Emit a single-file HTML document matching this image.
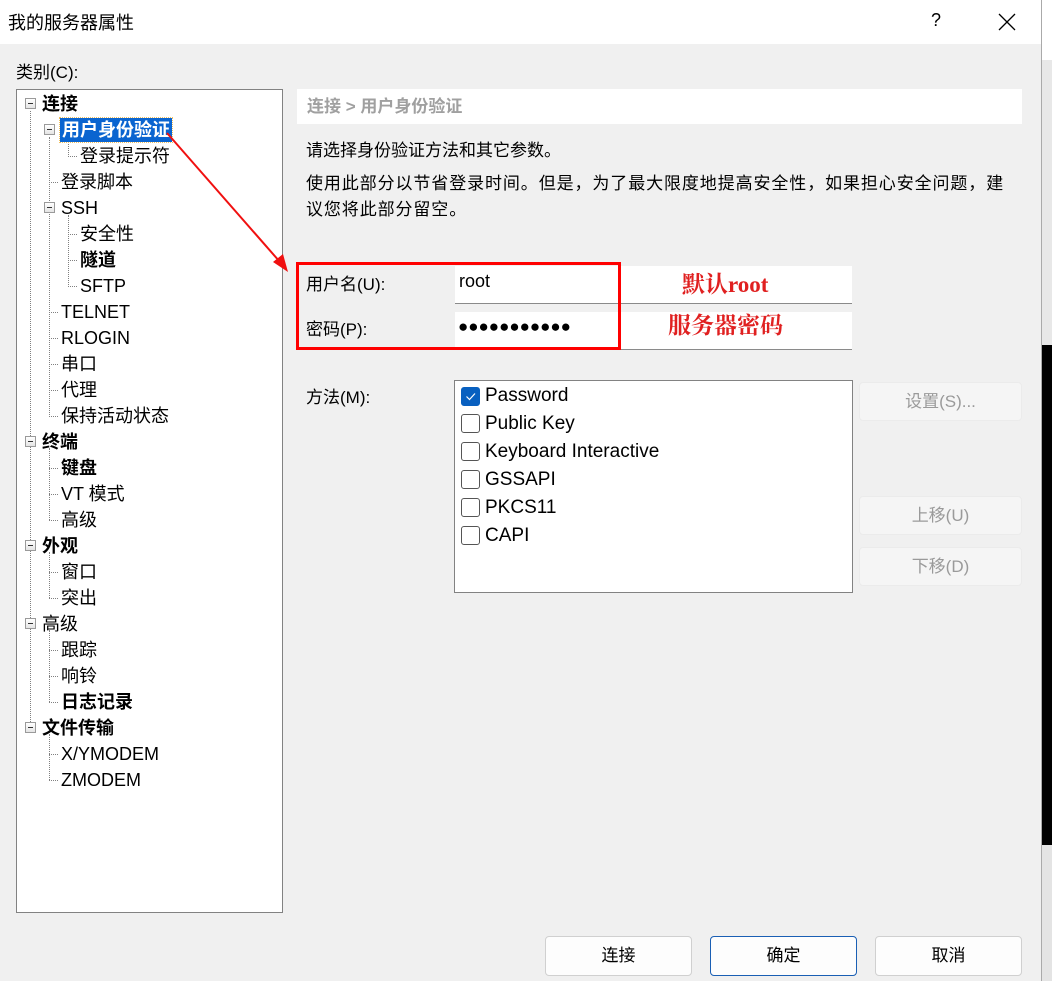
<!DOCTYPE html>
<html><head><meta charset="utf-8">
<style>
*{margin:0;padding:0;box-sizing:border-box}
body{width:1052px;height:981px;position:relative;overflow:hidden;background:#f0f0f0;font-family:"Liberation Sans","Noto Sans CJK SC",sans-serif;font-size:17px;color:#000}
.a{position:absolute;white-space:nowrap}
.t{position:absolute;white-space:nowrap;line-height:24px;height:24px;font-size:18px}
.b{font-weight:bold}
.box{position:absolute;width:11px;height:11px;border:1px solid #9a9a9a;background:linear-gradient(#fff,#e4e4e4)}
.box::after{content:"";position:absolute;left:2px;top:4px;width:5px;height:1px;background:#333}
.vl{position:absolute;width:0;border-left:1px dotted #808080}
.hl{position:absolute;height:0;border-top:1px dotted #808080}
.btn{position:absolute;background:#fdfdfd;border:1px solid #d0d0d0;border-radius:4px;text-align:center;line-height:37px}
.dis{background:#f5f5f5;border-color:#ebebeb;color:#9a9a9a}
.cb{position:absolute;left:461px;width:19px;height:19px;border:1px solid #555;border-radius:3px;background:#fff}
.it{position:absolute;left:485px;line-height:24px;font-size:19px}
.red{color:#e02020;font-family:'Liberation Serif','Noto Serif CJK SC',serif;font-size:23px;line-height:28px;font-weight:bold}
</style></head><body>
<div class="a" style="left:1042px;top:0;width:10px;height:60px;background:#fff"></div>
<div class="a" style="left:1042px;top:60px;width:10px;height:285px;background:#e8e8e8"></div>
<div class="a" style="left:1042px;top:345px;width:10px;height:500px;background:#000"></div>
<div class="a" style="left:1042px;top:845px;width:10px;height:136px;background:#e4e4e4"></div>
<div class="a" style="left:1041px;top:0;width:1px;height:981px;background:#aaa"></div>

<div class="a" style="left:0;top:0;width:1041px;height:44px;background:#fff"></div>
<div class="a" style="left:8px;top:9px;font-size:18px">我的服务器属性</div>
<div class="a" style="left:931px;top:10px;font-size:18px">?</div>
<svg class="a" style="left:998px;top:13px" width="18" height="18"><path d="M1 1L17 17M17 1L1 17" stroke="#000" stroke-width="1.3"/></svg>

<div class="a" style="left:16px;top:58px">类别(C):</div>

<div class="a" style="left:16px;top:89px;width:267px;height:824px;background:#fff;border:1px solid #828282"></div>
<div class="vl" style="left:30px;top:111px;height:617px"></div>
<div class="vl" style="left:49px;top:137px;height:280px"></div>
<div class="vl" style="left:68px;top:137px;height:20px"></div>
<div class="vl" style="left:68px;top:215px;height:72px"></div>
<div class="vl" style="left:49px;top:448px;height:72px"></div>
<div class="vl" style="left:49px;top:552px;height:46px"></div>
<div class="vl" style="left:49px;top:630px;height:72px"></div>
<div class="vl" style="left:49px;top:734px;height:46px"></div>
<div class="hl" style="left:68px;top:156px;width:9px"></div>
<div class="hl" style="left:68px;top:234px;width:9px"></div>
<div class="hl" style="left:68px;top:260px;width:9px"></div>
<div class="hl" style="left:68px;top:286px;width:9px"></div>
<div class="hl" style="left:49px;top:182px;width:9px"></div>
<div class="hl" style="left:49px;top:312px;width:9px"></div>
<div class="hl" style="left:49px;top:338px;width:9px"></div>
<div class="hl" style="left:49px;top:364px;width:9px"></div>
<div class="hl" style="left:49px;top:390px;width:9px"></div>
<div class="hl" style="left:49px;top:416px;width:9px"></div>
<div class="hl" style="left:49px;top:468px;width:9px"></div>
<div class="hl" style="left:49px;top:494px;width:9px"></div>
<div class="hl" style="left:49px;top:520px;width:9px"></div>
<div class="hl" style="left:49px;top:572px;width:9px"></div>
<div class="hl" style="left:49px;top:598px;width:9px"></div>
<div class="hl" style="left:49px;top:650px;width:9px"></div>
<div class="hl" style="left:49px;top:676px;width:9px"></div>
<div class="hl" style="left:49px;top:702px;width:9px"></div>
<div class="hl" style="left:49px;top:754px;width:9px"></div>
<div class="hl" style="left:49px;top:780px;width:9px"></div>
<div class="box" style="left:25px;top:98px"></div>
<div class="box" style="left:44px;top:124px"></div>
<div class="box" style="left:44px;top:202px"></div>
<div class="box" style="left:25px;top:436px"></div>
<div class="box" style="left:25px;top:540px"></div>
<div class="box" style="left:25px;top:618px"></div>
<div class="box" style="left:25px;top:722px"></div>

<div class="t b" style="left:42px;top:92px">连接</div>
<div class="t b" style="left:60px;top:118px;background:#0a64d0;color:#fff;padding:0 2px;outline:1px dotted #f0c060">用户身份验证</div>
<div class="t" style="left:80px;top:144px">登录提示符</div>
<div class="t" style="left:61px;top:170px">登录脚本</div>
<div class="t" style="left:61px;top:196px">SSH</div>
<div class="t" style="left:80px;top:222px">安全性</div>
<div class="t b" style="left:80px;top:248px">隧道</div>
<div class="t" style="left:80px;top:274px">SFTP</div>
<div class="t" style="left:61px;top:300px">TELNET</div>
<div class="t" style="left:61px;top:326px">RLOGIN</div>
<div class="t" style="left:61px;top:352px">串口</div>
<div class="t" style="left:61px;top:378px">代理</div>
<div class="t" style="left:61px;top:404px">保持活动状态</div>
<div class="t b" style="left:42px;top:430px">终端</div>
<div class="t b" style="left:61px;top:456px">键盘</div>
<div class="t" style="left:61px;top:482px">VT 模式</div>
<div class="t" style="left:61px;top:508px">高级</div>
<div class="t b" style="left:42px;top:534px">外观</div>
<div class="t" style="left:61px;top:560px">窗口</div>
<div class="t" style="left:61px;top:586px">突出</div>
<div class="t" style="left:42px;top:612px">高级</div>
<div class="t" style="left:61px;top:638px">跟踪</div>
<div class="t" style="left:61px;top:664px">响铃</div>
<div class="t b" style="left:61px;top:690px">日志记录</div>
<div class="t b" style="left:42px;top:716px">文件传输</div>
<div class="t" style="left:61px;top:742px">X/YMODEM</div>
<div class="t" style="left:61px;top:768px">ZMODEM</div>

<div class="a" style="left:297px;top:89px;width:725px;height:35px;background:#fff"></div>
<div class="a b" style="left:307px;top:95px;color:#a0a0a0;line-height:24px">连接 &gt; 用户身份验证</div>
<div class="a" style="left:306px;top:139px;line-height:24px">请选择身份验证方法和其它参数。</div>
<div class="a" style="left:306px;top:171px;line-height:26px;letter-spacing:0.9px">使用此部分以节省登录时间。但是，为了最大限度地提高安全性，如果担心安全问题，建<br>议您将此部分留空。</div>

<div class="a" style="left:455px;top:266px;width:397px;height:38px;background:#fff;border-bottom:1px solid #8a8a8a"></div>
<div class="a" style="left:455px;top:312px;width:397px;height:38px;background:#fff;border-bottom:1px solid #8a8a8a"></div>
<div class="a" style="left:306px;top:273px;line-height:24px">用户名(U):</div>
<div class="a" style="left:459px;top:269px;line-height:24px;font-size:18px">root</div>
<div class="a" style="left:306px;top:318px;line-height:24px">密码(P):</div>
<div class="a" style="left:458px;top:315px;line-height:24px;font-size:17px">●●●●●●●●●●●</div>
<div class="a" style="left:296px;top:262px;width:325px;height:88px;border:3px solid #f00"></div>
<div class="a red" style="left:682px;top:271px">默认root</div>
<div class="a red" style="left:668px;top:312px">服务器密码</div>

<div class="a" style="left:306px;top:386px;line-height:24px">方法(M):</div>
<div class="a" style="left:454px;top:380px;width:399px;height:213px;background:#fff;border:1px solid #828282"></div>
<div class="cb" style="top:387px;background:#0860c0;border-color:#0860c0"><svg width="17" height="17" style="position:absolute;left:0;top:0"><path d="M4.5 8.5l3 3 5.5-6" stroke="#fff" stroke-width="1.2" fill="none"/></svg></div>
<div class="it" style="top:384px">Password</div>
<div class="cb" style="top:414px"></div><div class="it" style="top:412px">Public Key</div>
<div class="cb" style="top:442px"></div><div class="it" style="top:440px">Keyboard Interactive</div>
<div class="cb" style="top:470px"></div><div class="it" style="top:468px">GSSAPI</div>
<div class="cb" style="top:498px"></div><div class="it" style="top:496px">PKCS11</div>
<div class="cb" style="top:526px"></div><div class="it" style="top:524px">CAPI</div>

<div class="btn dis" style="left:859px;top:382px;width:163px;height:39px">设置(S)...</div>
<div class="btn dis" style="left:859px;top:496px;width:163px;height:39px">上移(U)</div>
<div class="btn dis" style="left:859px;top:547px;width:163px;height:39px">下移(D)</div>

<div class="btn" style="left:545px;top:936px;width:147px;height:40px">连接</div>
<div class="btn" style="left:710px;top:936px;width:147px;height:40px;border-color:#1a5fb4">确定</div>
<div class="btn" style="left:875px;top:936px;width:147px;height:40px">取消</div>

<svg class="a" style="left:0;top:0" width="1052" height="981"><line x1="167" y1="133" x2="280" y2="262" stroke="#f01010" stroke-width="2"/><polygon points="288,272 273,262 283,254" fill="#f01010"/></svg>
</body></html>
